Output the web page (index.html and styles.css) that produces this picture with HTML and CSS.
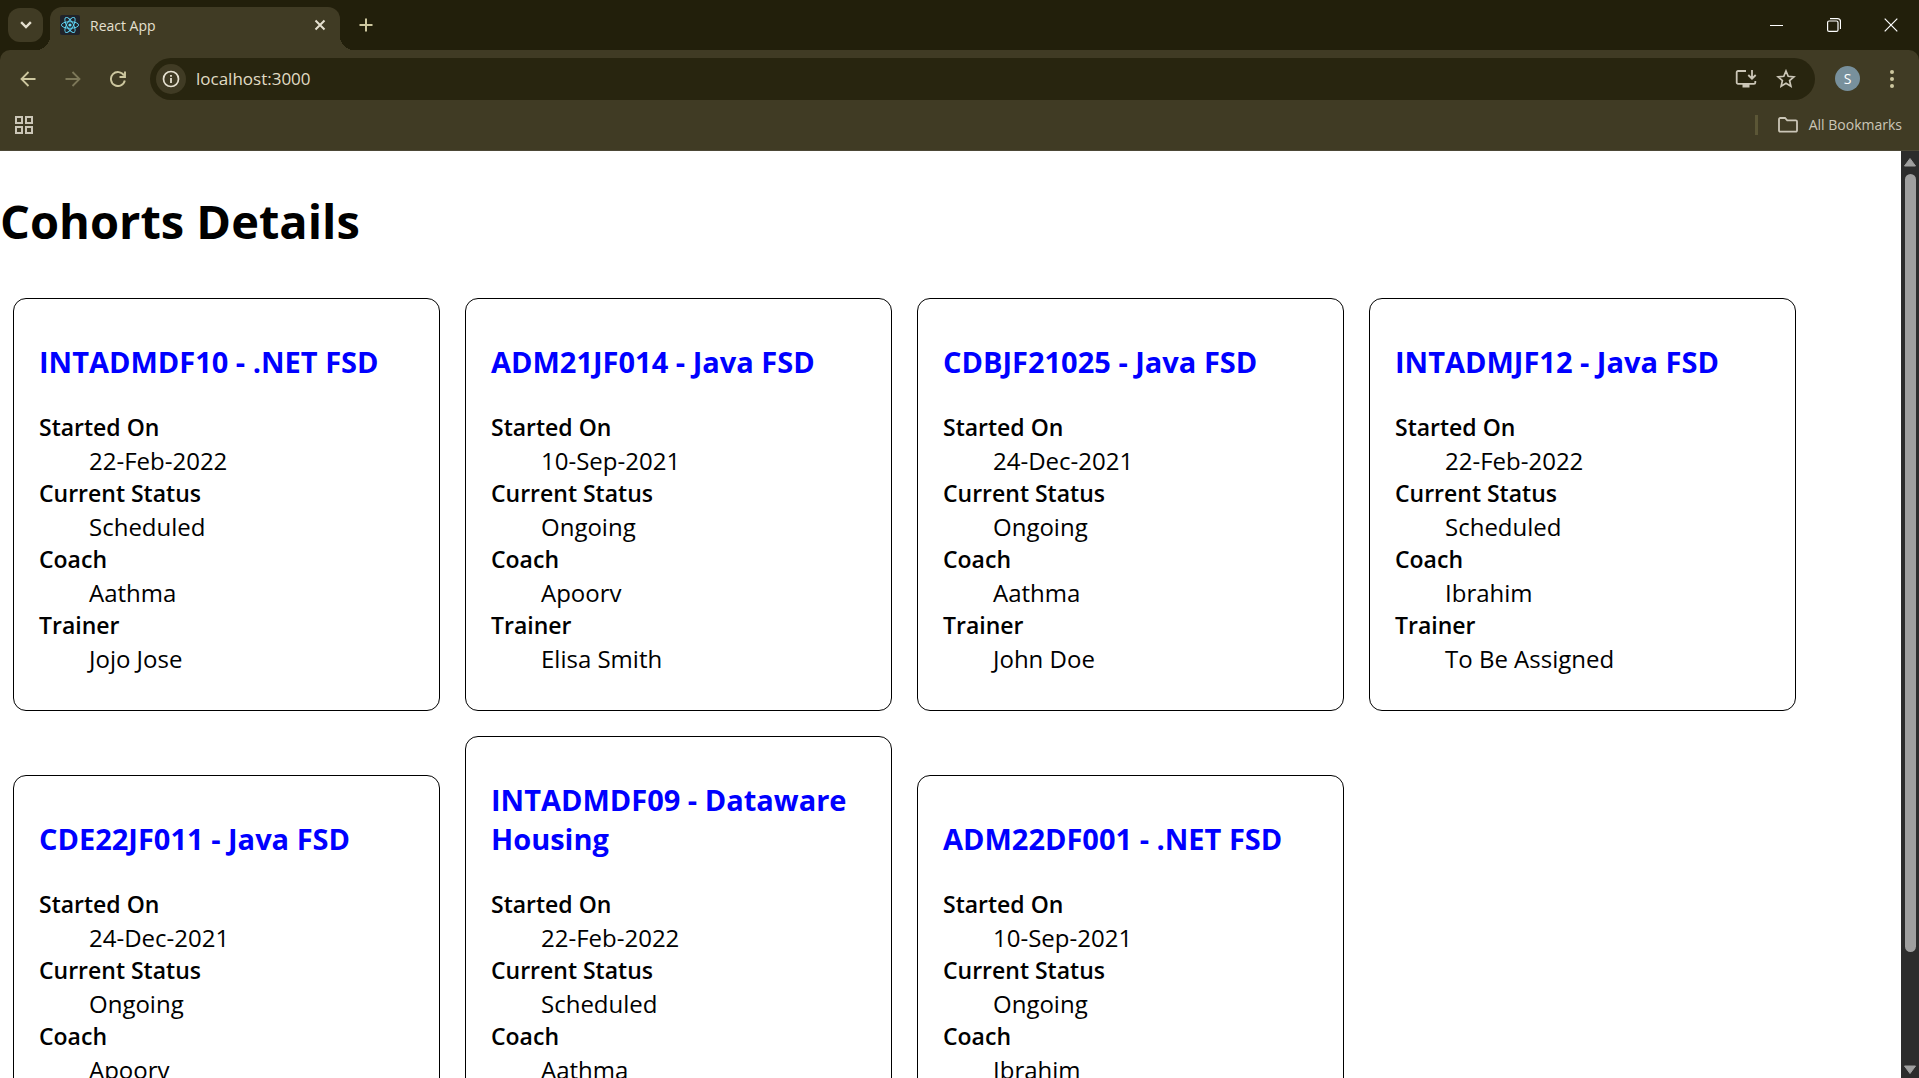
FILE: index.html
```html
<!DOCTYPE html>
<html lang="en">
<head>
<meta charset="utf-8">
<title>React App</title>
<link rel="stylesheet" href="styles.css">
</head>
<body>
<header class="browser">
  <div class="tab-strip">
    <button class="tab-search" aria-label="Search tabs"><svg width="12" height="8" viewBox="0 0 12 8"><path d="M2 2l4 4 4-4" fill="none" stroke="currentColor" stroke-width="2.4" stroke-linecap="square"/></svg></button>
    <div class="tab">
      <svg class="favicon" width="20" height="20" viewBox="0 0 20 20"><rect width="20" height="20" rx="2" fill="#20232a"/><circle cx="10" cy="10" r="1.6" fill="#61dafb"/><g fill="none" stroke="#61dafb" stroke-width=".9"><ellipse cx="10" cy="10" rx="8.6" ry="3.3"/><ellipse cx="10" cy="10" rx="8.6" ry="3.3" transform="rotate(60 10 10)"/><ellipse cx="10" cy="10" rx="8.6" ry="3.3" transform="rotate(120 10 10)"/></g></svg>
      <span class="tab-title">React App</span>
      <button class="icon-button" aria-label="Close tab"><svg width="12" height="12" viewBox="0 0 12 12"><path d="M1.5 1.500l9 9M10.500 1.500l-9 9" stroke="currentColor" stroke-width="2"/></svg></button>
    </div>
    <button class="icon-button new-tab" aria-label="New tab"><svg width="14" height="14" viewBox="0 0 14 14"><path d="M7 .5v13M.5 7h13" stroke="currentColor" stroke-width="2"/></svg></button>
    <div class="window-controls">
      <button class="icon-button" aria-label="Minimize"><svg width="14" height="14" viewBox="0 0 14 14"><path d="M0 7.500h13" stroke="currentColor"/></svg></button>
      <button class="icon-button" aria-label="Restore"><svg width="14" height="14" viewBox="0 0 14 14" fill="none" stroke="currentColor" stroke-width="1.200"><rect x=".6" y="3" width="10.400" height="10.400" rx="1.500"/><path d="M3 .7h7.500a3 3 0 0 1 3 3V11"/></svg></button>
      <button class="icon-button" aria-label="Close"><svg width="14" height="14" viewBox="0 0 14 14"><path d="M.7.7l12.600 12.600M13.300.7L.7 13.300" stroke="currentColor" stroke-width="1.200"/></svg></button>
    </div>
  </div>
  <div class="toolbar">
    <nav class="nav-buttons">
      <button class="icon-button" aria-label="Back"><svg width="16" height="16" viewBox="0 0 16 16"><path d="M15.500 8H1.500M8.500 1L1.500 8l7 7" fill="none" stroke="currentColor" stroke-width="1.800"/></svg></button>
      <button class="icon-button forward" aria-label="Forward"><svg width="16" height="16" viewBox="0 0 16 16"><path d="M.5 8h14M7.500 1l7 7-7 7" fill="none" stroke="currentColor" stroke-width="1.800"/></svg></button>
      <button class="icon-button" aria-label="Reload"><svg width="16" height="16" viewBox="0 0 16 16"><path d="M14 4.500A7 7 0 1 0 14.800 9.500M15 .5v5.500H9.500" fill="none" stroke="currentColor" stroke-width="1.900"/></svg></button>
    </nav>
    <div class="omnibox">
      <button class="site-info" aria-label="View site information"><svg width="18" height="18" viewBox="0 0 18 18"><circle cx="9" cy="9" r="7.500" fill="none" stroke="currentColor" stroke-width="1.700"/><path d="M9 8v5M9 5v1.800" stroke="currentColor" stroke-width="1.800"/></svg></button>
      <input class="address" type="text" value="localhost:3000" aria-label="Address">
      <button class="icon-button" aria-label="Install app"><svg width="22" height="20" viewBox="0 0 22 20"><path d="M11 2H3a1.300 1.300 0 0 0-1.300 1.300v10.200A1.300 1.300 0 0 0 3 14.800h16a1.300 1.300 0 0 0 1.300-1.300V12M17 1v8M13.300 6L17 9.700 20.700 6" fill="none" stroke="currentColor" stroke-width="1.800"/><path d="M7.500 15h7v3.500h-7z" fill="currentColor"/></svg></button>
      <button class="icon-button" aria-label="Bookmark this tab"><svg width="20" height="20" viewBox="0 0 20 20"><path d="M10 2l2.200 5.300 5.700.5-4.300 3.800 1.300 5.700L10 14.300l-4.900 3 1.300-5.700L2.100 7.800l5.700-.5z" fill="none" stroke="currentColor" stroke-width="1.700"/></svg></button>
    </div>
    <button class="avatar" aria-label="Profile">S</button>
    <button class="icon-button" aria-label="Menu"><svg width="6" height="20" viewBox="0 0 6 20" fill="currentColor"><circle cx="3" cy="3" r="2"/><circle cx="3" cy="10" r="2"/><circle cx="3" cy="17" r="2"/></svg></button>
  </div>
  <div class="bookmarks">
    <button class="icon-button apps" aria-label="Apps"><svg width="18" height="18" viewBox="0 0 18 18" fill="none" stroke="currentColor" stroke-width="2"><path d="M1 1h6v6H1zM11 1h6v6h-6zM1 11h6v6H1zM11 11h6v6h-6z"/></svg></button>
    <button class="all-bookmarks"><svg width="20" height="16" viewBox="0 0 20 16"><path d="M1 2.200A1.200 1.200 0 0 1 2.200 1H7l2.200 2.300h8.600A1.200 1.200 0 0 1 19 4.500v9a1.200 1.200 0 0 1-1.200 1.200H2.200A1.200 1.200 0 0 1 1 13.500z" fill="none" stroke="currentColor" stroke-width="1.800"/></svg>All Bookmarks</button>
  </div>
</header>
<div class="viewport">
  <main class="page">
    <h1>Cohorts Details</h1>
    <div class="cohorts">
      <article class="card"><h3>INTADMDF10 - .NET FSD</h3><dl><dt>Started On</dt><dd>22-Feb-2022</dd><dt>Current Status</dt><dd>Scheduled</dd><dt>Coach</dt><dd>Aathma</dd><dt>Trainer</dt><dd>Jojo Jose</dd></dl></article>
      <article class="card"><h3>ADM21JF014 - Java FSD</h3><dl><dt>Started On</dt><dd>10-Sep-2021</dd><dt>Current Status</dt><dd>Ongoing</dd><dt>Coach</dt><dd>Apoorv</dd><dt>Trainer</dt><dd>Elisa Smith</dd></dl></article>
      <article class="card"><h3>CDBJF21025 - Java FSD</h3><dl><dt>Started On</dt><dd>24-Dec-2021</dd><dt>Current Status</dt><dd>Ongoing</dd><dt>Coach</dt><dd>Aathma</dd><dt>Trainer</dt><dd>John Doe</dd></dl></article>
      <article class="card"><h3>INTADMJF12 - Java FSD</h3><dl><dt>Started On</dt><dd>22-Feb-2022</dd><dt>Current Status</dt><dd>Scheduled</dd><dt>Coach</dt><dd>Ibrahim</dd><dt>Trainer</dt><dd>To Be Assigned</dd></dl></article>
      <article class="card"><h3>CDE22JF011 - Java FSD</h3><dl><dt>Started On</dt><dd>24-Dec-2021</dd><dt>Current Status</dt><dd>Ongoing</dd><dt>Coach</dt><dd>Apoorv</dd></dl></article>
      <article class="card"><h3>INTADMDF09 - Dataware Housing</h3><dl><dt>Started On</dt><dd>22-Feb-2022</dd><dt>Current Status</dt><dd>Scheduled</dd><dt>Coach</dt><dd>Aathma</dd></dl></article>
      <article class="card"><h3>ADM22DF001 - .NET FSD</h3><dl><dt>Started On</dt><dd>10-Sep-2021</dd><dt>Current Status</dt><dd>Ongoing</dd><dt>Coach</dt><dd>Ibrahim</dd></dl></article>
    </div>
  </main>
  <div class="scrollbar" aria-hidden="true">
    <svg width="14" height="10" viewBox="0 0 14 10"><path d="M7 1.500L12.500 9h-11z" fill="currentColor" stroke="currentColor" stroke-linejoin="round"/></svg>
    <div class="track"><div class="thumb"></div></div>
    <svg width="14" height="10" viewBox="0 0 14 10"><path d="M7 8.500L12.500 1h-11z" fill="currentColor" stroke="currentColor" stroke-linejoin="round"/></svg>
  </div>
</div>
</body>
</html>
```
FILE: styles.css
```css
* { box-sizing: border-box; }

body {
  display: flex;
  flex-direction: column;
  height: 100vh;
  margin: 0;
  overflow: hidden;
  background: #fff;
  color: #000;
  font-family: "Segoe UI", "Open Sans", "Noto Sans", sans-serif;
}

button {
  display: flex;
  align-items: center;
  justify-content: center;
  padding: 0;
  border: 0;
  background: none;
  color: inherit;
  font: inherit;
}

.browser {
  flex: none;
  background: #221f0b;
  color: #e5e0d0;
  font-size: 14px;
}

/* Tab strip */
.tab-strip {
  display: flex;
  align-items: center;
  height: 50px;
  padding-left: 8px;
}

.tab-search {
  width: 35px;
  height: 34px;
  border-radius: 12px;
  background: #403b24;
}

.tab {
  position: relative;
  display: flex;
  align-items: center;
  gap: 10px;
  width: 290px;
  height: 43px;
  margin: 7px 0 0 7px;
  padding: 0 8px 7px 10px;
  border-radius: 12px 12px 0 0;
  background: #403b24;
}

.tab::before,
.tab::after {
  content: "";
  position: absolute;
  bottom: 0;
  width: 14px;
  height: 14px;
}

.tab::before {
  right: 100%;
  background: radial-gradient(circle at 0 0, transparent 14px, #403b24 14px);
}

.tab::after {
  left: 100%;
  background: radial-gradient(circle at 100% 0, transparent 14px, #403b24 14px);
}

.tab-title { flex: 1; }

.icon-button {
  width: 24px;
  height: 24px;
}

.new-tab {
  margin-left: 14px;
  color: #cdc79f;
}

.window-controls {
  display: flex;
  gap: 33px;
  margin-left: auto;
  padding-right: 16px;
  color: #fff;
}

/* Toolbar */
.toolbar {
  display: flex;
  align-items: center;
  height: 57px;
  padding: 0 15px 0 16px;
  border-radius: 10px 10px 0 0;
  background: #403b24;
  color: #cdc79f;
}

.nav-buttons {
  display: flex;
  gap: 21px;
}

.forward { color: #7d7859; }

.omnibox {
  display: flex;
  flex: 1;
  align-items: center;
  gap: 16px;
  height: 42px;
  margin: 0 20px 0 20px;
  padding: 0 17px 0 6px;
  border-radius: 21px;
  background: #28250f;
  color: #cbc6b7;
}

.site-info {
  width: 30px;
  height: 30px;
  border-radius: 50%;
  background: #403b24;
  color: #e5e0d0;
}

.address {
  flex: 1;
  min-width: 0;
  margin-left: -6px;
  padding: 0;
  border: 0;
  background: none;
  color: #e0dcc4;
  font: inherit;
  font-size: 17px;
}

.avatar {
  width: 25px;
  height: 25px;
  margin-right: 20px;
  border-radius: 50%;
  background: #78909c;
  color: #fff;
  font-size: 14px;
}

/* Bookmarks bar */
.bookmarks {
  display: flex;
  align-items: center;
  justify-content: space-between;
  height: 44px;
  padding: 0 17px 8px 12px;
  border-bottom: 1px solid #4c4836;
  background: #403b24;
  color: #cbc6b7;
}

.all-bookmarks {
  gap: 11px;
  height: 20px;
  padding-left: 20px;
  border-left: 3px solid #5b5636;
}

/* Page */
.viewport {
  display: flex;
  flex: 1;
  min-height: 0;
}

.page {
  flex: 1;
  overflow: hidden;
  font-size: 24px;
  line-height: 33px;
}

h1 {
  margin: 37px 0 43px;
  font-size: 47px;
  line-height: 67px;
}

.cohorts {
  display: flex;
  flex-wrap: wrap;
  align-items: flex-end;
  gap: 25px;
  padding: 0 13px;
}

.card {
  flex: 0 0 427px;
  padding: 12px 25px;
  border: 1px solid #000;
  border-radius: 13px;
}

.card h3 {
  margin: 31px 0 30px;
  color: #00f;
  font-size: 29px;
  line-height: 39px;
}

.card dl { margin: 0 0 23px; }

.card dt {
  font-size: 23px;
  font-weight: 600;
}

.card dd { margin-left: 50px; }

.scrollbar {
  display: flex;
  flex-direction: column;
  align-items: center;
  gap: 7px;
  width: 18px;
  padding: 6px 0 3px;
  background: #2c2c2c;
  color: #9f9f9f;
}

.track {
  flex: 1;
  width: 11px;
}

.thumb {
  height: 88%;
  border-radius: 6px;
  background: #9f9f9f;
}
```
